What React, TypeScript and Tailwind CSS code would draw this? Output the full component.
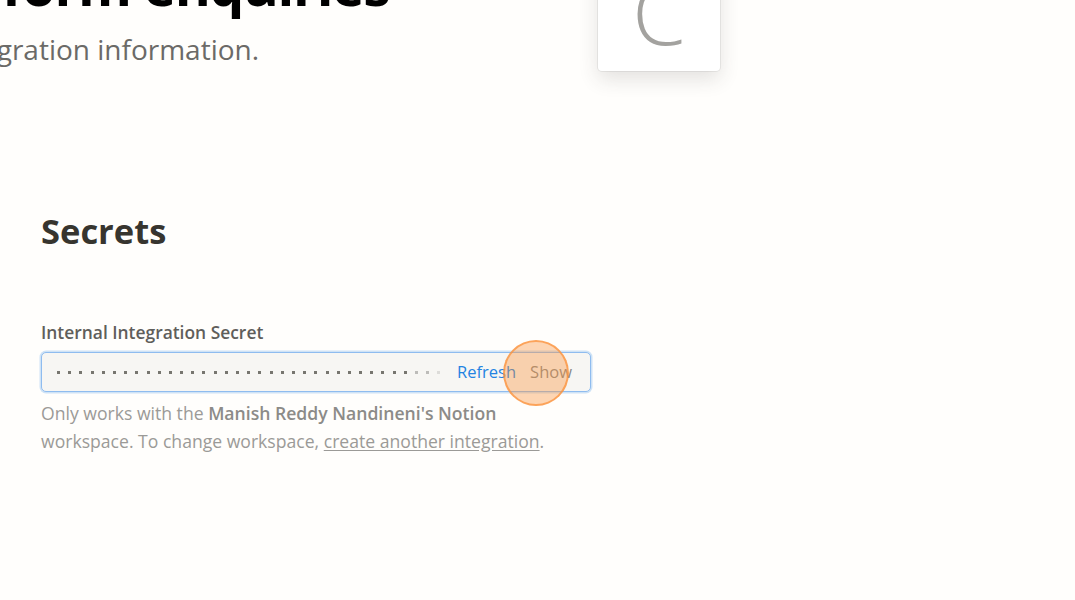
const DOTS = Array.from({ length: 35 });

export default function App() {
  return (
    <div
      className="relative h-[600px] w-[1075px] overflow-hidden bg-[#fffefc] text-[#37352f]"
      style={{ fontFamily: '"Open Sans", "Noto Sans", sans-serif' }}
    >
      {/* page header, scrolled partly out of view */}
      <h1 className="absolute left-[-216px] top-[-46px] whitespace-nowrap text-[55px] font-bold leading-[62px] tracking-tight text-black">
        Contact form enquiries
      </h1>
      <p className="absolute left-[-236px] top-[32px] whitespace-nowrap text-[28px] leading-[34px] text-[#6b6a67]">
        View and edit integration information.
      </p>

      {/* icon card */}
      <div className="absolute left-[598px] top-[-52px] flex h-[123px] w-[122px] items-center justify-center rounded-[4px] bg-white shadow-[0_8px_20px_rgba(55,53,47,0.14),0_0_0_1px_rgba(55,53,47,0.08)]">
        <span className="mt-[4px] text-[86px] font-light leading-none text-[#a3a29f]">C</span>
      </div>

      <div className="px-[41px] pt-[209px]">
        <h2 className="text-[34.5px] font-bold leading-[44px] text-[#37352f]">Secrets</h2>

        <div className="mt-[67px] w-[550px]">
          <label className="block text-[17.4px] font-semibold leading-[24px] text-[#5f5e5b]">
            Internal Integration Secret
          </label>

          <div className="relative mt-[8px] flex h-[40px] items-center rounded-[5px] border-[1.5px] border-[#8fbcef] bg-[#f7f6f3] pl-[15px] pr-[18px] shadow-[0_0_0_1.5px_rgba(35,131,226,0.22)]">
            <div className="flex flex-1 items-center gap-[8.2px]">
              {DOTS.map((_, i) => (
                <span
                  key={i}
                  className={
                    i < 32
                      ? "h-[3px] w-[3px] bg-[#77766f]"
                      : i < 34
                        ? "h-[3px] w-[3px] bg-[#bdbcb9]"
                        : "h-[3px] w-[3px] bg-[#dddcd9]"
                  }
                />
              ))}
            </div>
            <button className="text-[16.5px] leading-[22px] text-[#2383e2]">Refresh</button>
            <button className="ml-[14px] text-[16.5px] leading-[22px] text-[#8a8985]">Show</button>

            {/* click highlight */}
            <span className="absolute left-[461px] top-[-13px] h-[66px] w-[66px] rounded-full border-2 border-[rgba(251,146,60,0.75)] bg-[rgba(251,146,60,0.38)]" />
          </div>

          <p className="mt-[7px] text-[17.6px] leading-[28px] text-[#9b9a97]">
            Only works with the{" "}
            <span className="font-semibold text-[#8c8b88]">Manish Reddy Nandineni's Notion</span>{" "}
            workspace. To change workspace,{" "}
            <a className="underline underline-offset-2">create another integration</a>.
          </p>
        </div>
      </div>
    </div>
  );
}
